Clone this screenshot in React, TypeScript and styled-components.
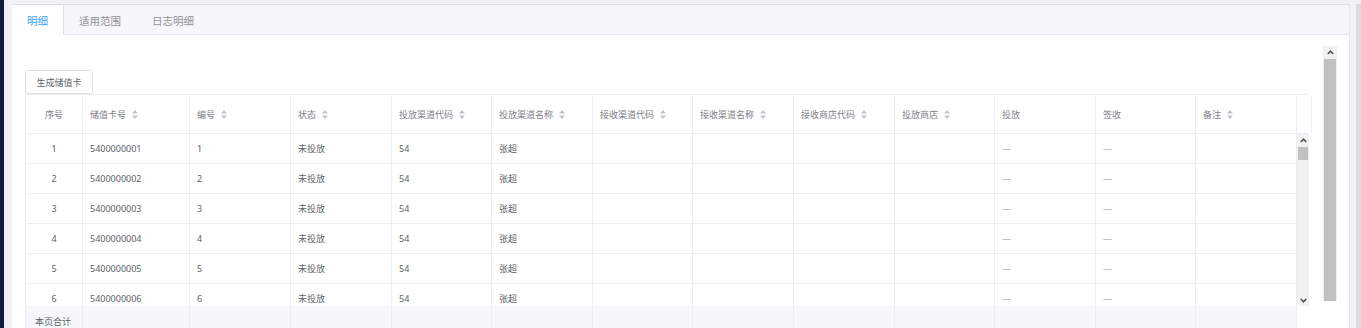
import React from "react";
import styled, { createGlobalStyle } from "styled-components";

const GlobalStyle = createGlobalStyle`
  html, body { margin: 0; padding: 0; height: 328px; overflow: hidden; }
  body { font-family: "Noto Sans", "Noto Sans CJK SC", sans-serif; background: #f0f2f5; }
  * { box-sizing: border-box; }
`;

const Page = styled.div`
  display: flex;
  width: 1361px;
  height: 328px;
  overflow: hidden;
`;

const Sidebar = styled.div`
  width: 4px;
  flex: none;
  background: #0d1f3c;
`;

const Main = styled.div`
  flex: 1;
  display: flex;
  padding: 4px 0 0 8px;
  background: #f0f2f5;
`;

const Panel = styled.div`
  width: 1338px;
  flex: none;
  display: flex;
  flex-direction: column;
  background: #fff;
  border-top: 1px solid #dcdfe6;
  border-right: 1px solid #e4e7ed;
`;

const RightStrip = styled.div`
  flex: 1;
  display: flex;
  justify-content: flex-end;
`;

const RightEdge = styled.div`
  width: 5px;
  background: #dcdcdc;
`;

const TabBar = styled.div`
  display: flex;
  flex: none;
  height: 30px;
  background: #f5f7fa;
  border-bottom: 1px solid #e4e7ed;
`;

const Tab = styled.div<{ $active?: boolean }>`
  height: 30px;
  padding: 0 15px;
  display: flex;
  align-items: center;
  font-size: 10.5px;
  color: ${(p) => (p.$active ? "#409eff" : "#909399")};
  background: ${(p) => (p.$active ? "#fff" : "transparent")};
  border-right: 1px solid ${(p) => (p.$active ? "#dcdfe6" : "transparent")};
  margin-bottom: -1px;
`;

const Body = styled.div`
  flex: 1;
  display: flex;
  padding: 11px 12px 0 13px;
  min-height: 0;
`;

const Content = styled.div`
  flex: 1;
  padding: 24px 15px 0 0;
  display: flex;
  flex-direction: column;
  align-items: flex-start;
  overflow: hidden;
`;

const Button = styled.button`
  flex: none;
  height: 24px;
  width: 68px;
  padding: 0;
  border: 1px solid #dcdfe6;
  border-radius: 3px;
  background: #fff;
  color: #606266;
  font-family: inherit;
  font-size: 9px;
`;

const Table = styled.div`
  flex: none;
  width: 1284px;
  border-top: 1px solid #ebeef5;
  border-left: 1px solid #ebeef5;
  display: flex;
  flex-direction: column;
`;

const colWidths = [57, 107, 101, 101, 100, 101, 100, 101, 101, 100, 101, 100, 101];
const gridCols = colWidths.map((w) => `${w}px`).join(" ");

const HeaderRow = styled.div`
  display: grid;
  grid-template-columns: ${gridCols} 12px;
  height: 38px;
  border-bottom: 1px solid #ebeef5;
  box-sizing: content-box;
`;

const HeadCell = styled.div<{ $center?: boolean }>`
  display: flex;
  align-items: center;
  justify-content: ${(p) => (p.$center ? "center" : "flex-start")};
  padding: 0 7px;
  font-size: 9px;
  color: #7d8087;
  border-right: 1px solid #ebeef5;
  white-space: nowrap;
  gap: 6px;
`;

const BodyWrap = styled.div`
  display: flex;
  height: 172px;
`;

const Rows = styled.div`
  width: 1271px;
  overflow: hidden;
`;

const Row = styled.div`
  display: grid;
  grid-template-columns: ${gridCols};
  height: 30px;
  border-bottom: 1px solid #ebeef5;
`;

const Cell = styled.div<{ $center?: boolean; $dash?: boolean }>`
  display: flex;
  align-items: center;
  justify-content: ${(p) => (p.$center ? "center" : "flex-start")};
  padding: 0 7px;
  font-size: 9px;
  color: ${(p) => (p.$dash ? "#8c8f96" : "#606266")};
  border-right: 1px solid #ebeef5;
  white-space: nowrap;
`;

const ScrollBar = styled.div<{ $w: number }>`
  width: ${(p) => p.$w}px;
  flex: none;
  display: flex;
  flex-direction: column;
  background: #f1f1f1;
`;

const ScrollArrow = styled.div`
  height: 12px;
  flex: none;
  display: flex;
  align-items: center;
  justify-content: center;
  background: #f1f1f1;
`;

const Thumb = styled.div<{ $h: number }>`
  height: ${(p) => p.$h}px;
  flex: none;
  margin: 1px 1px 0;
  background: #c1c1c1;
`;

const Track = styled.div`
  flex: 1;
`;

const FooterRow = styled.div`
  display: grid;
  grid-template-columns: ${gridCols} 12px;
  height: 30px;
`;

const FootCell = styled.div<{ $gutter?: boolean }>`
  display: flex;
  align-items: center;
  padding: 0 9px;
  font-size: 9px;
  color: #606266;
  background: ${(p) => (p.$gutter ? "#fff" : "#f5f7fa")};
  border-right: 1px solid ${(p) => (p.$gutter ? "transparent" : "#ebeef5")};
  white-space: nowrap;
`;

const OuterScroll = styled.div`
  width: 14px;
  flex: none;
  display: flex;
  flex-direction: column;
`;

const SortIcon = () => (
  <svg width="6" height="9" viewBox="0 0 6 9">
    <polygon points="3,0 6,3.5 0,3.5" fill="#c0c4cc" />
    <polygon points="0,5.5 6,5.5 3,9" fill="#c0c4cc" />
  </svg>
);

const Chevron = ({ down }: { down?: boolean }) => (
  <svg width="7" height="5" viewBox="0 0 7 5">
    <polyline
      points={down ? "0.8,1 3.5,3.8 6.2,1" : "0.8,4 3.5,1.2 6.2,4"}
      fill="none"
      stroke="#505050"
      strokeWidth="1.6"
    />
  </svg>
);

const columns: { title: string; sort: boolean }[] = [
  { title: "序号", sort: false },
  { title: "储值卡号", sort: true },
  { title: "编号", sort: true },
  { title: "状态", sort: true },
  { title: "投放渠道代码", sort: true },
  { title: "投放渠道名称", sort: true },
  { title: "接收渠道代码", sort: true },
  { title: "接收渠道名称", sort: true },
  { title: "接收商店代码", sort: true },
  { title: "投放商店", sort: true },
  { title: "投放", sort: false },
  { title: "签收", sort: false },
  { title: "备注", sort: true },
];

const rows = [1, 2, 3, 4, 5, 6].map((n) => ({
  idx: String(n),
  card: `540000000${n}`,
  no: String(n),
  status: "未投放",
  code: "54",
  name: "张超",
}));

export default function App() {
  return (
    <>
      <GlobalStyle />
      <Page>
        <Sidebar />
        <Main>
          <Panel>
            <TabBar>
              <Tab $active>明细</Tab>
              <Tab>适用范围</Tab>
              <Tab>日志明细</Tab>
            </TabBar>
            <Body>
              <Content>
                <Button>生成储值卡</Button>
                <Table>
                  <HeaderRow>
                    {columns.map((c, i) => (
                      <HeadCell key={c.title} $center={i === 0}>
                        <span>{c.title}</span>
                        {c.sort && <SortIcon />}
                      </HeadCell>
                    ))}
                    <HeadCell />
                  </HeaderRow>
                  <BodyWrap>
                    <Rows>
                      {rows.map((r) => (
                        <Row key={r.idx}>
                          <Cell $center>{r.idx}</Cell>
                          <Cell>{r.card}</Cell>
                          <Cell>{r.no}</Cell>
                          <Cell>{r.status}</Cell>
                          <Cell>{r.code}</Cell>
                          <Cell>{r.name}</Cell>
                          <Cell />
                          <Cell />
                          <Cell />
                          <Cell />
                          <Cell $dash>—</Cell>
                          <Cell $dash>—</Cell>
                          <Cell />
                        </Row>
                      ))}
                    </Rows>
                    <ScrollBar $w={12}>
                      <ScrollArrow>
                        <Chevron />
                      </ScrollArrow>
                      <Thumb $h={13} />
                      <Track />
                      <ScrollArrow>
                        <Chevron down />
                      </ScrollArrow>
                    </ScrollBar>
                  </BodyWrap>
                  <FooterRow>
                    <FootCell>本页合计</FootCell>
                    {colWidths.slice(1).map((w, i) => (
                      <FootCell key={i} />
                    ))}
                    <FootCell $gutter />
                  </FooterRow>
                </Table>
              </Content>
              <OuterScroll>
                <ScrollBar $w={14}>
                  <ScrollArrow>
                    <Chevron />
                  </ScrollArrow>
                  <Thumb $h={242} />
                  <Track />
                </ScrollBar>
              </OuterScroll>
            </Body>
          </Panel>
          <RightStrip>
            <RightEdge />
          </RightStrip>
        </Main>
      </Page>
    </>
  );
}
